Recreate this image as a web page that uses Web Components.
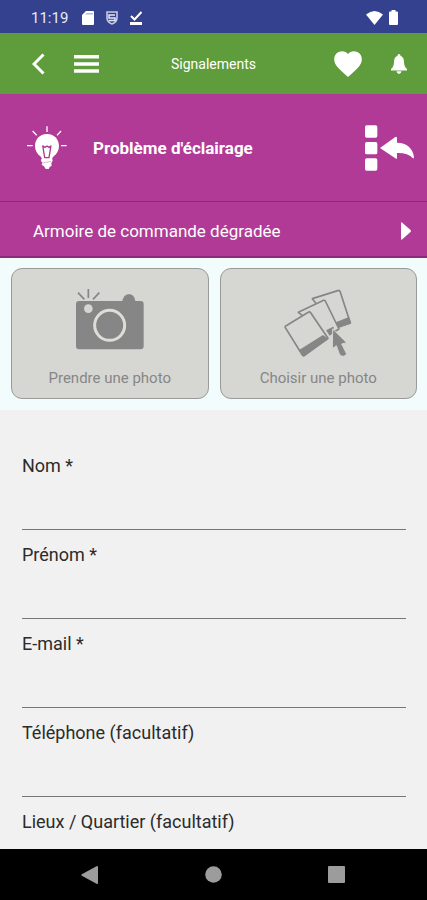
<!DOCTYPE html>
<html lang="fr">
<head>
<meta charset="utf-8">
<meta name="viewport" content="width=device-width, initial-scale=1">
<title>Signalements</title>
<style>
  body { margin: 0; font-family: Roboto, "Liberation Sans", sans-serif; background: #f1f1f1; }
</style>
</head>
<body>
<report-screen></report-screen>

<script>
  function define(name, html, setup) {
    const template = document.createElement('template');
    template.innerHTML = `<style>
      *, *::before { box-sizing: border-box; }
      svg { display: block; fill: currentColor; }
      button { margin: 0; padding: 0; border: 0; background: none; color: inherit; font: inherit; cursor: pointer; }
    </style>` + html;
    customElements.define(name, class extends HTMLElement {
      constructor() {
        super();
        this.attachShadow({ mode: 'open' }).append(template.content.cloneNode(true));
      }
      connectedCallback() { if (setup) setup(this, this.shadowRoot); }
    });
  }

  define('status-bar', `
    <style>
      :host { display: flex; align-items: center; height: 33px; padding: 2px 29px 0 31px; background: #33418f; color: #fff; flex: none; }
      time { font-size: 15px; line-height: 20px; margin-right: 14px; color: #e8eaf6; }
      .left, .right { display: flex; align-items: center; }
      .left { gap: 12px; flex: 1; }
      .right { gap: 6px; }
    </style>
    <time>11:19</time>
    <div class="left">
      <svg width="12" height="14" viewBox="0 0 12 14"><path d="M4 0h7a1 1 0 0 1 1 1v12a1 1 0 0 1-1 1H1a1 1 0 0 1-1-1V4z"/><path d="M4 2h7v1.500H3.500z" fill="#b4badc"/></svg>
      <svg width="12" height="14" viewBox="0 0 12 14"><path d="M1 1h10v6q0 4-5 6-5-2-5-6z" fill="none" stroke="#c5cae9" stroke-width="1.600"/><path d="M9 4H3v3h6v2.500H3" fill="none" stroke="#e8eaf6" stroke-width="1.500"/></svg>
      <svg width="12" height="14" viewBox="0 0 12 14"><path d="M1 5l3.500 3.500L11.500 1" fill="none" stroke="#fff" stroke-width="2"/><path d="M0 11h12v3H0z"/></svg>
    </div>
    <div class="right">
      <svg width="17" height="14" viewBox="0 0 17 14"><path d="M0 3.500Q8.500-3.500 17 3.500L8.500 14z"/></svg>
      <svg width="9" height="15" viewBox="0 0 9 15"><path d="M2.500 1.500V0h4v1.500H8q1 0 1 1V14q0 1-1 1H1q-1 0-1-1V2.500q0-1 1-1z"/></svg>
    </div>
  `);

  define('app-bar', `
    <style>
      :host { display: grid; grid-template-columns: 1fr auto 1fr; align-items: center; height: 61px; background: #5f9c3c; color: #fff; flex: none; }
      nav { display: flex; align-items: center; gap: 29px; padding-left: 32px; }
      .end { justify-content: flex-end; padding: 0 20px 0 0; }
      h1 { margin: 0; font-size: 14px; line-height: 20px; font-weight: 400; }
    </style>
    <nav>
      <button aria-label="Retour"><svg width="13" height="22" viewBox="0 0 13 22"><path d="M11.500 1.500L2 11l9.500 9.500" fill="none" stroke="#fff" stroke-width="3"/></svg></button>
      <button aria-label="Menu"><svg width="25" height="18" viewBox="0 0 25 18"><path d="M0 0h25v3.500H0zM0 7.200h25v3.500H0zM0 14.300h25v3.500H0z"/></svg></button>
    </nav>
    <h1><slot></slot></h1>
    <nav class="end">
      <button aria-label="Favoris"><svg width="28" height="26" viewBox="0 0 28 26"><path d="M14 3C11-1 5-.5 2 3-1 7 0 12 3 15.500Q7 20 14 26q7-6 11-10.500C28 12 29 7 26 3 23-.5 17-1 14 3z"/></svg></button>
      <button aria-label="Notifications"><svg width="16" height="20" viewBox="0 0 16 20"><path d="M8 0q1.500 0 1.500 1.700Q13 3 13 8q0 4.500 3 7v1.500H0V15q3-2.500 3-7 0-5 3.500-6.300Q6.500 0 8 0zM5.500 17.300h5Q10 20 8 20t-2.500-2.700z"/></svg></button>
    </nav>
  `);

  define('category-header', `
    <style>
      :host { display: flex; align-items: center; height: 108px; padding: 0 12px 0 27px; background: #b13a97; color: #fff; border-bottom: 1px solid #8d2a7b; flex: none; }
      h2 { flex: 1; margin: 0 0 0 26px; font-size: 17px; line-height: 24px; font-weight: 700; }
    </style>
    <svg width="40" height="44" viewBox="81 93 120 132">
      <path d="M141 117c23 0 36 17 36 36 0 14-7 24-16 31l-6 8h-28l-6-8c-9-7-16-17-16-31 0-19 13-36 36-36z"/>
      <path d="M124 191l32-3 2 9-4 8 1 7-6 4-3 6h-9l-5-8-7-5 2-6-4-5z"/>
      <path d="M128 151l6 37h13l6-37M129 153l6 4 6-4 6 4 6-4" fill="none" stroke="#b13a97" stroke-width="4"/>
      <path d="M127 204l26-5" stroke="#d68bc8" stroke-width="2"/>
      <path d="M141 94v17M98 108l12 13M183 108l-12 13M81 152h17M183 152h17" stroke="#fff" stroke-width="4"/>
    </svg>
    <h2><slot></slot></h2>
    <button aria-label="Retour à la liste"><svg width="50" height="46" viewBox="195 90 150 138">
      <rect x="195" y="91" width="37" height="37" rx="5"/><rect x="195" y="141" width="37" height="37" rx="5"/><rect x="195" y="190" width="37" height="37" rx="5"/>
      <path d="M240 159l46-33q5-2 5 4v13c29 0 49 18 51 44q0 5-4 2-15-16-47-15v14q0 6-5 2z"/>
    </svg></button>
  `);

  define('subcategory-row', `
    <style>
      :host { display: block; background: #b13a97; color: #fff; border-bottom: 2px solid #8d2a7b; flex: none; }
      button { display: flex; align-items: center; justify-content: space-between; width: 100%; height: 54px; padding: 3px 16px 0 33px; font-size: 17px; line-height: 24px; text-align: left; }
    </style>
    <button><span><slot></slot></span><svg width="10" height="18" viewBox="0 0 10 18"><path d="M0 1q0-1 1-.5L9.500 8q.8 1 0 2L1 17.500q-1 .5-1-.5z"/></svg></button>
  `);

  define('photo-action', `
    <style>
      :host { display: block; flex: 1; min-width: 0; }
      button { display: flex; flex-direction: column; align-items: center; justify-content: space-between; width: 100%; height: 131px; padding: 20px 8px 9px; border: 1px solid #999b99; border-radius: 11px; background: #d6d7d2; color: #868686; font-size: 15px; line-height: 22px; }
    </style>
    <button><slot name="icon"></slot><span><slot></slot></span></button>
  `);

  define('form-field', `
    <style>
      :host { display: block; height: 89px; flex: none; }
      label { display: block; font-size: 18px; line-height: 24px; color: #2b2b2b; }
      input { display: block; width: 100%; height: 52px; margin: 0; padding: 16px 0 4px; border: 0; border-bottom: 1px solid #777; border-radius: 0; background: none; font: inherit; font-size: 18px; color: #222; outline: none; }
      input:focus { border-bottom-color: #b13a97; }
    </style>
    <label for="field"><slot></slot></label>
    <input id="field">
  `, (host, root) => { root.querySelector('input').type = host.getAttribute('type') || 'text'; });

  define('system-nav', `
    <style>
      :host { display: flex; align-items: center; justify-content: space-between; height: 51px; padding: 0 82px 0 81px; background: #000; color: #9c9c9c; flex: none; }
    </style>
    <button aria-label="Précédent"><svg width="17" height="18" viewBox="0 0 17 18"><path d="M15.500.3Q17-.3 17 1v16q0 1.300-1.500.7L.8 9.700Q0 9 .8 8.300z"/></svg></button>
    <button aria-label="Accueil"><svg width="17" height="17" viewBox="0 0 17 17"><circle cx="8.500" cy="8.500" r="8.300"/></svg></button>
    <button aria-label="Applications récentes"><svg width="17" height="17" viewBox="0 0 17 17"><rect width="17" height="17" rx="1"/></svg></button>
  `);

  define('report-screen', `
    <style>
      :host { display: flex; flex-direction: column; height: 100vh; }
      .photos { display: flex; gap: 11px; padding: 10px 10px 11px 11px; background: #f3fcfd; flex: none; }
      form { flex: 1; min-height: 0; overflow-y: auto; scrollbar-width: none; padding: 44px 21px 0 22px; }
    </style>
    <status-bar></status-bar>
    <app-bar>Signalements</app-bar>
    <category-header>Problème d'éclairage</category-header>
    <subcategory-row>Armoire de commande dégradée</subcategory-row>
    <section class="photos">
      <photo-action>
        <svg slot="icon" width="68" height="61" viewBox="231 102 204 183">
          <path d="M240 138h130c3-12 9-20 20-20s17 8 19 20h16q9 0 9 9v127q0 9-9 9H240q-9 0-9-9V147q0-9 9-9z"/>
          <circle cx="268" cy="161" r="13" fill="#d6d7d2"/>
          <circle cx="332" cy="211" r="45" fill="none" stroke="#deded9" stroke-width="9"/>
          <path d="M268 102v27M237 113l19 20M301 113l-19 20" stroke="#868686" stroke-width="5"/>
        </svg>
        Prendre une photo
      </photo-action>
      <photo-action>
        <svg slot="icon" width="68" height="68" viewBox="213 102 204 204">
          <g stroke="#868686" stroke-width="5" stroke-linejoin="round">
            <path d="M298 131l79-25q3 0 4 3l31 95-46 14z" fill="#d6d7d2"/>
            <path d="M371 203l36-14 5 15-36 13z"/>
            <path d="M256 172l76-36q3-1 5 2l41 84-35 20z" fill="#d6d7d2"/>
            <path d="M340 228l20-10-8 20-8 4z"/>
            <path d="M297 166q3 0 5 5l47 77" fill="none" stroke="#d6d7d2" stroke-width="7"/>
            <path d="M217 214l70-43q3-2 6 2l52 77-70 51q-4 3-7-1l-51-82q-1-2 0-4z" fill="#d6d7d2"/>
            <path d="M261 286l69-43 12 9-71 49z"/>
          </g>
          <path d="M359 222l42 41-15 4 14 28q1 8-9 9-8 1-12-7l-9-25-12 9z" stroke="#d6d7d2" stroke-width="3"/>
        </svg>
        Choisir une photo
      </photo-action>
    </section>
    <form>
      <form-field>Nom *</form-field>
      <form-field>Prénom *</form-field>
      <form-field type="email">E-mail *</form-field>
      <form-field type="tel">Téléphone (facultatif)</form-field>
      <form-field>Lieux / Quartier (facultatif)</form-field>
    </form>
    <system-nav></system-nav>
  `);
</script>
</body>
</html>
